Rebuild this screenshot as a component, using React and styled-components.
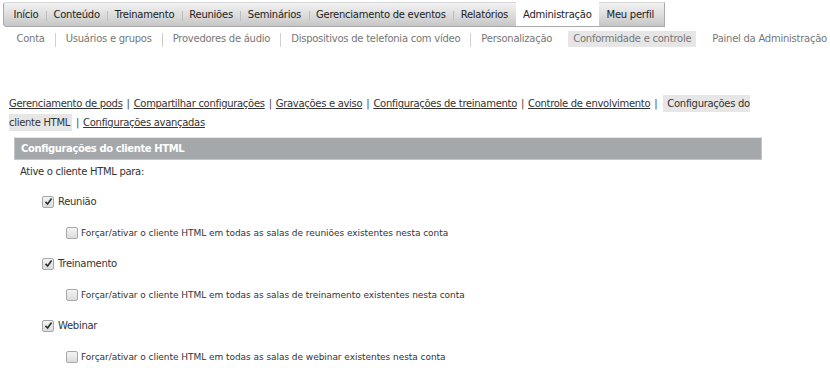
import styled, { createGlobalStyle } from "styled-components";

const GlobalStyle = createGlobalStyle`
  body {
    margin: 0;
    background: #fff;
    font-family: "DejaVu Sans", Verdana, sans-serif;
    color: #333;
  }
`;

const Page = styled.div`
  width: 830px;
  height: 374px;
  overflow: hidden;
`;

const TopBar = styled.nav`
  display: inline-flex;
  align-items: stretch;
  height: 25px;
  margin: 2px 0 0 3px;
  background: linear-gradient(#f2f2f2, #d9d9d9 60%, #c6c6c6);
  border: 1px solid #a9a9a9;
  border-top-color: #d8d8d8;
  border-radius: 3px 0 0 4px;
  box-sizing: border-box;
  padding: 0 2px 0 2px;
`;

const TopItem = styled.a`
  position: relative;
  display: flex;
  align-items: center;
  flex-shrink: 0;
  white-space: nowrap;
  padding: 0 7.5px;
  font-size: 10px;
  letter-spacing: -0.25px;
  color: #222;
  text-decoration: none;
  background: ${(p) => (p.$active ? "#fff" : "transparent")};
  margin-top: ${(p) => (p.$active ? "-3px" : "0")};
  padding-top: ${(p) => (p.$active ? "2px" : "0")};
  & + &::before {
    content: "";
    position: absolute;
    left: 0;
    top: 8px;
    height: 10px;
    border-left: 1px solid #bdbdbd;
  }
`;

const SubNav = styled.nav`
  display: flex;
  align-items: center;
  height: 20px;
  margin: 2px 0 0 6px;
`;

const SubItem = styled.a`
  position: relative;
  flex-shrink: 0;
  white-space: nowrap;
  padding: 2px 5px 3px;
  margin: 0 5.5px;
  font-size: 10px;
  letter-spacing: -0.25px;
  color: #777;
  text-decoration: none;
  background: ${(p) => (p.$active ? "#e6e6e6" : "transparent")};
  & + &::before {
    content: "";
    position: absolute;
    left: -6px;
    top: 2px;
    height: 14px;
    border-left: 1px solid #d0d0d0;
  }
`;

const Tabs = styled.div`
  width: 750px;
  margin: 45px 0 0 9px;
  font-size: 10px;
  letter-spacing: -0.3px;
  line-height: 19px;
  color: #333;
`;

const TabLink = styled.a`
  color: #333;
  text-decoration: underline;
`;

const Current = styled.span`
  background: #e6e6e6;
  padding: 3px 2px 3px 4px;
  margin-left: 2px;
`;

const Pipe = styled.span`
  margin: 0 4px;
  color: #444;
`;

const Panel = styled.section`
  margin: 5px 0 0 14px;
  width: 748px;
`;

const PanelHeader = styled.h2`
  margin: 0;
  height: 23px;
  line-height: 22px;
  box-sizing: border-box;
  padding-left: 6px;
  background: #a4a8ab;
  border: 1px solid #c3c6c8;
  border-top-color: #e6e7e8;
  font-size: 10px;
  letter-spacing: -0.4px;
  font-weight: bold;
  color: #fff;
`;

const Intro = styled.p`
  margin: 6px 0 0 6px;
  font-size: 10px;
  letter-spacing: -0.3px;
  color: #333;
`;

const Options = styled.div`
  display: flex;
  flex-direction: column;
  margin-top: 9px;
`;

const Row = styled.label`
  display: flex;
  align-items: center;
  gap: ${(p) => (p.$sub ? "3px" : "4px")};
  height: 31px;
  padding-left: ${(p) => (p.$sub ? "52px" : "28px")};
  font-size: ${(p) => (p.$sub ? "9px" : "10px")};
  letter-spacing: ${(p) => (p.$sub ? "-0.05px" : "-0.3px")};
  color: #333;
`;

const Box = styled.span`
  display: inline-flex;
  align-items: center;
  justify-content: center;
  flex-shrink: 0;
  width: 10px;
  height: 10px;
  border: 1px solid #a8a8a8;
  border-radius: 2px;
  background: linear-gradient(#f4f4f4, #dcdcdc);
  box-sizing: content-box;
`;

const Check = ({ on }) => (
  <Box>
    {on && (
      <svg width="9" height="9" viewBox="0 0 9 9">
        <path d="M1.5 4.8 L3.6 7 L7.6 1.6" fill="none" stroke="#333" strokeWidth="1.7" />
      </svg>
    )}
  </Box>
);

const topItems = [
  "Início",
  "Conteúdo",
  "Treinamento",
  "Reuniões",
  "Seminários",
  "Gerenciamento de eventos",
  "Relatórios",
  "Administração",
  "Meu perfil",
];

const subItems = [
  "Conta",
  "Usuários e grupos",
  "Provedores de áudio",
  "Dispositivos de telefonia com vídeo",
  "Personalização",
  "Conformidade e controle",
  "Painel da Administração",
];

const rooms = [
  ["Reunião", "reuniões"],
  ["Treinamento", "treinamento"],
  ["Webinar", "webinar"],
];

export default function App() {
  return (
    <Page>
      <GlobalStyle />
      <TopBar>
        {topItems.map((t) => (
          <TopItem key={t} $active={t === "Administração"}>
            {t}
          </TopItem>
        ))}
      </TopBar>
      <SubNav>
        {subItems.map((t) => (
          <SubItem key={t} $active={t === "Conformidade e controle"}>
            {t}
          </SubItem>
        ))}
      </SubNav>
      <Tabs>
        <TabLink>Gerenciamento de pods</TabLink>
        <Pipe>|</Pipe>
        <TabLink>Compartilhar configurações</TabLink>
        <Pipe>|</Pipe>
        <TabLink>Gravações e aviso</TabLink>
        <Pipe>|</Pipe>
        <TabLink>Configurações de treinamento</TabLink>
        <Pipe>|</Pipe>
        <TabLink>Controle de envolvimento</TabLink>
        <Pipe>|</Pipe>
        <Current>Configurações do cliente HTML</Current>
        <Pipe>|</Pipe>
        <TabLink>Configurações avançadas</TabLink>
      </Tabs>
      <Panel>
        <PanelHeader>Configurações do cliente HTML</PanelHeader>
        <Intro>Ative o cliente HTML para:</Intro>
        <Options>
          {rooms.map(([name, word]) => (
            <div key={name}>
              <Row>
                <Check on />
                {name}
              </Row>
              <Row $sub>
                <Check />
                Forçar/ativar o cliente HTML em todas as salas de {word} existentes nesta conta
              </Row>
            </div>
          ))}
        </Options>
      </Panel>
    </Page>
  );
}
